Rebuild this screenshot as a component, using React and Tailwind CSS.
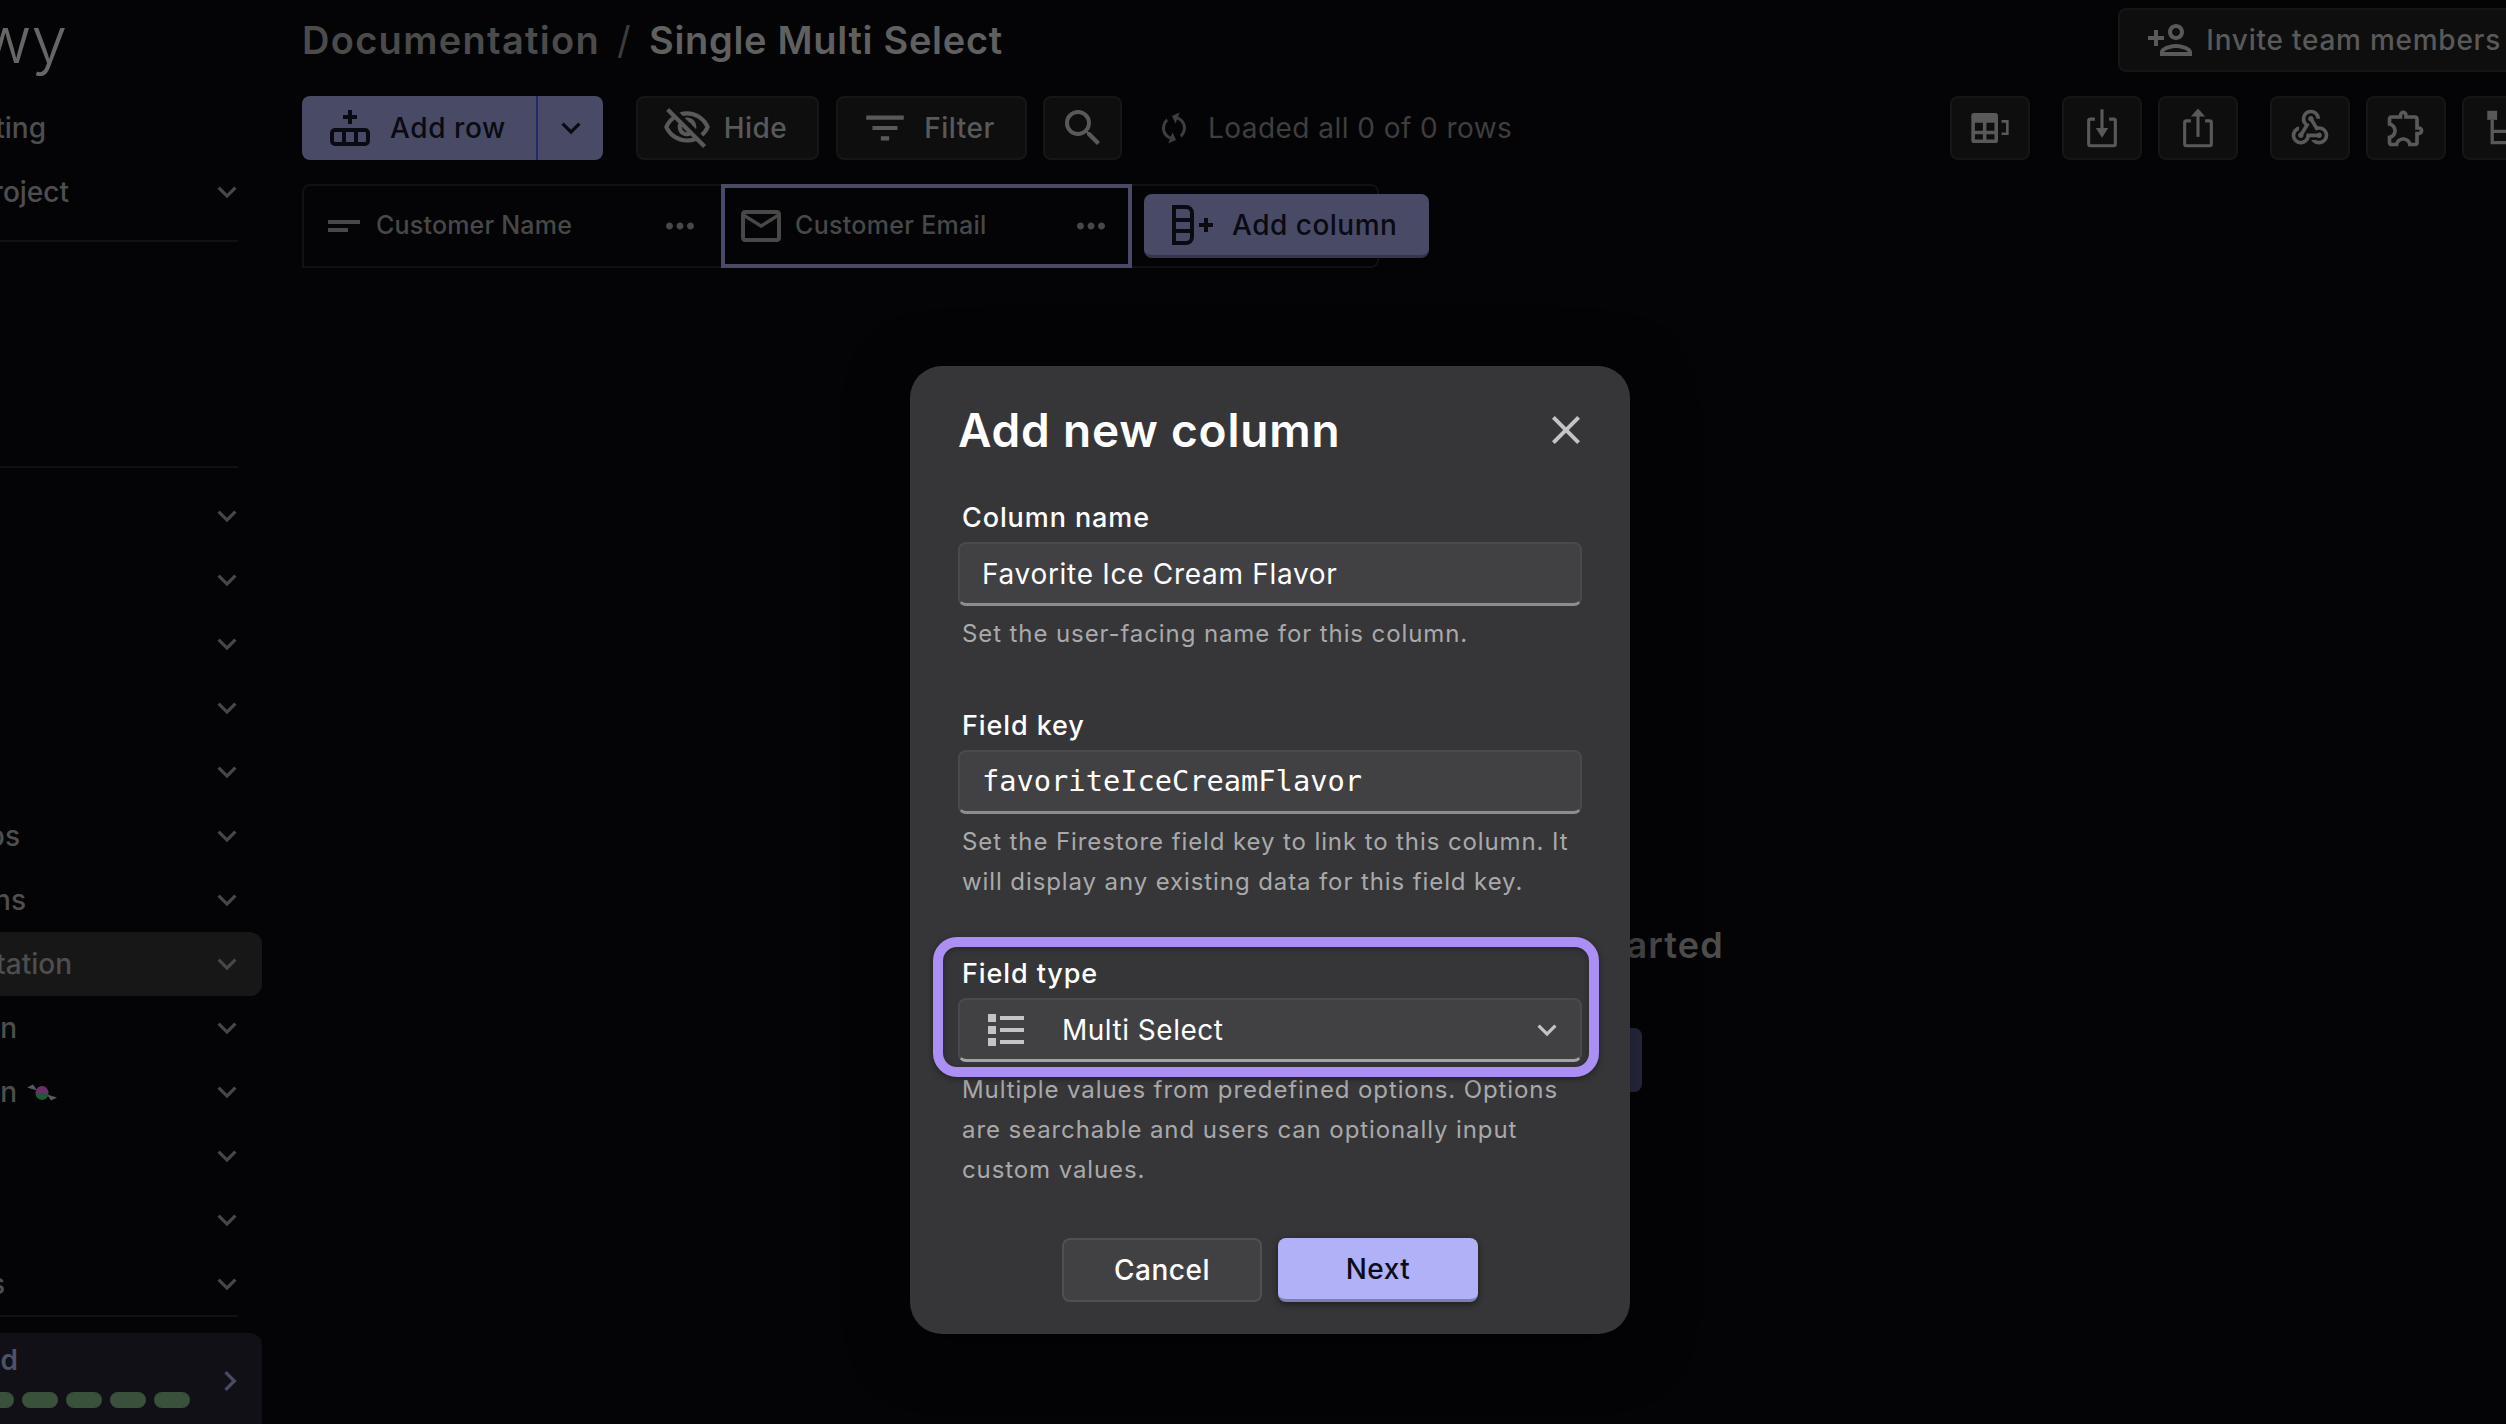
import { MdClose, MdExpandMore, MdChevronRight, MdFilterList, MdMoreHoriz, MdOutlineExtension, MdOutlineMailOutline, MdOutlinePersonAdd, MdOutlineVisibilityOff, MdSearch, MdShortText, MdSync, MdWebhook } from "react-icons/md";

function AddRowIcon({ className }) {
  return (
    <svg viewBox="0 0 40 36" className={className} fill="none" stroke="currentColor">
      <path d="M20 0v14M13 7h14" strokeWidth="4" />
      <rect x="2" y="20" width="36" height="14" rx="3" strokeWidth="4" />
      <path d="M14 20v14M26 20v14" strokeWidth="4" />
    </svg>
  );
}

function AddColumnIcon({ className }) {
  return (
    <svg viewBox="0 0 44 40" className={className} fill="none" stroke="currentColor">
      <path d="M2 2h12a6 6 0 0 1 6 6v24a6 6 0 0 1-6 6H2z" strokeWidth="4" />
      <path d="M2 15h18M2 26h18" strokeWidth="4" />
      <path d="M34 13v14M27 20h14" strokeWidth="4" />
    </svg>
  );
}

function TableIcon({ className }) {
  return (
    <svg viewBox="0 0 44 36" className={className} fill="currentColor">
      <path fillRule="evenodd" d="M4 1h24a3 3 0 0 1 3 3v28a3 3 0 0 1-3 3H4a3 3 0 0 1-3-3V4a3 3 0 0 1 3-3zm1 11v9h9v-9zm13 0v9h9v-9zM5 25v6h9v-6zm13 0v6h9v-6z" />
      <path d="M35 9h8v17h-8v-3h5V12h-5z" />
    </svg>
  );
}

function ImportIcon({ className }) {
  return (
    <svg viewBox="0 0 36 44" className={className} fill="none" stroke="currentColor">
      <path d="M10 12H5a2 2 0 0 0-2 2v26a2 2 0 0 0 2 2h26a2 2 0 0 0 2-2V14a2 2 0 0 0-2-2h-5" strokeWidth="3.5" />
      <path d="M18 1v24" strokeWidth="3.5" />
      <path d="M11 22h14l-7 11z" fill="currentColor" stroke="none" />
    </svg>
  );
}

function ExportIcon({ className }) {
  return (
    <svg viewBox="0 0 36 44" className={className} fill="none" stroke="currentColor">
      <path d="M10 14H5a2 2 0 0 0-2 2v24a2 2 0 0 0 2 2h26a2 2 0 0 0 2-2V16a2 2 0 0 0-2-2h-5" strokeWidth="3.5" />
      <path d="M18 8v24" strokeWidth="3.5" />
      <path d="M10 9h16L18 0z" fill="currentColor" stroke="none" />
    </svg>
  );
}

function TreeIcon({ className }) {
  return (
    <svg viewBox="0 0 36 44" className={className} fill="none" stroke="currentColor">
      <rect x="0" y="1" width="12" height="11" fill="currentColor" stroke="none" />
      <path d="M6 12v28h26M6 26h26" strokeWidth="4" />
    </svg>
  );
}

function MultiSelectIcon({ className }) {
  return (
    <svg viewBox="0 0 36 32" className={className} fill="currentColor">
      <rect x="0" y="0" width="8" height="8" />
      <rect x="0" y="12" width="8" height="8" />
      <rect x="0" y="24" width="8" height="8" />
      <rect x="12" y="2" width="24" height="4" />
      <rect x="12" y="14" width="24" height="4" />
      <rect x="12" y="26" width="24" height="4" />
    </svg>
  );
}

function CandyIcon() {
  return (
    <svg viewBox="0 0 30 16" className="ml-[10px] h-[17px] w-[30px] shrink-0">
      <path d="M0 3l6-3 4 6zM30 13l-6 3-4-6z" fill="#5a5a5a" />
      <circle cx="15" cy="8" r="6.5" fill="#6a2f68" />
      <path d="M8.5 9a6.5 6.5 0 0 0 13 0z" fill="#1f5a36" />
    </svg>
  );
}

function SideRow({ label, width, active, extra }) {
  return (
    <div className={`flex h-[64px] w-[262px] items-center rounded-r-xl text-[#4e4e4e] ${active ? "bg-[#171717]" : ""}`}>
      <div className={`flex shrink-0 justify-end whitespace-nowrap text-[28px] font-medium ${width}`}>{label}</div>
      {extra}
      <MdExpandMore className="ml-auto mr-[16px] size-[38px] shrink-0 text-[#474747]" />
    </div>
  );
}

function ToolButton({ children, className = "" }) {
  return (
    <button className={`flex h-[64px] shrink-0 items-center justify-center rounded-lg border-2 border-[#161617] bg-[#0e0e0f] text-[28px] font-medium tracking-[0.5px] text-[#595959] ${className}`}>
      {children}
    </button>
  );
}

function Field({ label, children, help }) {
  return (
    <div>
      <div className="mb-[6px] h-[36px] pl-1 text-[27px] font-medium leading-[36px] tracking-[0.9px] text-white">{label}</div>
      {children}
      <p className="mt-[8px] pl-1 text-[24px] leading-[40px] tracking-[0.9px] text-[#a9a9ab]">{help}</p>
    </div>
  );
}

function TextBox({ children, mono }) {
  return (
    <div className={`flex h-[64px] items-center rounded-lg border-2 border-b-[3px] border-[#4a4a4c] border-b-[#8d8d8f] bg-[#414143] pl-[22px] text-white ${mono ? "font-['DejaVu_Sans_Mono',monospace] text-[28.7px]" : "text-[28px] tracking-[0.7px]"}`}>
      {children}
    </div>
  );
}

export default function App() {
  return (
    <div className="relative h-[1424px] w-full overflow-hidden bg-[#040407] font-['Inter',sans-serif]">
      <div className="flex w-[2842px]">
        {/* sidebar, cut off by the left edge */}
        <aside className="flex w-[302px] shrink-0 flex-col">
          <div className="flex h-[96px] w-[67px] shrink-0 justify-end whitespace-nowrap pt-[2px] text-[64px] font-light leading-[76px] text-[#666666]">Rowy</div>
          <div className="flex h-[64px] w-[262px] items-center text-[#4e4e4e]">
            <div className="flex w-[46px] shrink-0 justify-end whitespace-nowrap text-[28px] font-medium">Marketing</div>
          </div>
          <SideRow label="My project" width="w-[69px]" />
          <div className="mt-[16px] h-[2px] w-[238px] bg-[#111113]" />
          <div className="h-[224px]" />
          <div className="h-[2px] w-[238px] bg-[#111113]" />
          <div className="mt-[16px] flex flex-col">
            <SideRow label="" width="w-0" />
            <SideRow label="" width="w-0" />
            <SideRow label="" width="w-0" />
            <SideRow label="" width="w-0" />
            <SideRow label="" width="w-0" />
            <SideRow label="Apps" width="w-[20px]" />
            <SideRow label="Columns" width="w-[26px]" />
            <SideRow label="Documentation" width="w-[72px]" active />
            <SideRow label="Design" width="w-[17px]" />
            <SideRow label="Admin" width="w-[17px]" extra={<CandyIcon />} />
            <SideRow label="" width="w-0" />
            <SideRow label="" width="w-0" />
            <SideRow label="Tools" width="w-[5px]" />
          </div>
          <div className="mt-[-1px] h-[2px] w-[238px] bg-[#111113]" />
          <div className="mt-[16px] flex h-[110px] w-[262px] items-start rounded-r-xl bg-[#101016] pt-[8px]">
            <div>
              <div className="flex w-[18px] justify-end whitespace-nowrap text-[28px] font-semibold leading-[38px] text-[#505068]">Get started</div>
              <div className="mt-[13px] flex w-[190px] justify-end gap-[8px]">
                <div className="h-[16px] w-[36px] shrink-0 rounded-full bg-[#39503a]" />
                <div className="h-[16px] w-[36px] shrink-0 rounded-full bg-[#39503a]" />
                <div className="h-[16px] w-[36px] shrink-0 rounded-full bg-[#39503a]" />
                <div className="h-[16px] w-[36px] shrink-0 rounded-full bg-[#39503a]" />
                <div className="h-[16px] w-[36px] shrink-0 rounded-full bg-[#39503a]" />
              </div>
            </div>
            <MdChevronRight className="ml-[20px] mt-[20px] size-[40px] text-[#4a4a66]" />
          </div>
        </aside>

        {/* main area, runs past the right edge */}
        <main className="flex w-[2540px] shrink-0 flex-col">
          <div className="flex h-[96px] items-start justify-between pt-[8px]">
            <h1 className="flex h-[64px] items-center gap-[17px] text-[38px] font-semibold tracking-[1.3px]">
              <span className="text-[#4b4b4b]">Documentation</span>
              <span className="font-normal text-[#3c3c3c]">/</span>
              <span className="tracking-[0.7px] text-[#606060]">Single Multi Select</span>
            </h1>
            <ToolButton className="mr-[309px] gap-[12px] pl-[26px] pr-[30px] tracking-[0.75px]">
              <MdOutlinePersonAdd className="size-[48px]" />
              Invite team members
            </ToolButton>
          </div>

          <div className="flex h-[64px] items-center">
            <div className="flex h-[64px] w-[301px] shrink-0 rounded-lg bg-[#484a66] text-[28px] font-medium tracking-[0.6px] text-[#0a0a12]">
              <div className="flex w-[236px] items-center gap-[20px] border-r-2 border-[#22286a] pl-[28px]">
                <AddRowIcon className="h-[36px] w-[40px] shrink-0" />
                Add row
              </div>
              <div className="flex flex-1 items-center justify-center">
                <MdExpandMore className="size-[38px]" />
              </div>
            </div>
            <ToolButton className="ml-[33px] w-[183px] gap-[12px] pr-[6px]">
              <MdOutlineVisibilityOff className="size-[50px]" />
              Hide
            </ToolButton>
            <ToolButton className="ml-[17px] w-[191px] gap-[14px] pr-[8px]">
              <MdFilterList className="size-[50px]" />
              Filter
            </ToolButton>
            <ToolButton className="ml-[16px] w-[79px]">
              <MdSearch className="size-[48px]" />
            </ToolButton>
            <div className="ml-[34px] flex items-center gap-[16px] text-[28px] tracking-[0.45px] text-[#3e3e3e]">
              <MdSync className="size-[36px] rotate-[20deg]" />
              Loaded all 0 of 0 rows
            </div>
            <div className="ml-auto mr-[300px] flex items-center gap-[16px]">
              <ToolButton className="mr-[16px] w-[80px]"><TableIcon className="h-[32px] w-[44px]" /></ToolButton>
              <ToolButton className="w-[80px]"><ImportIcon className="h-[42px] w-[32px]" /></ToolButton>
              <ToolButton className="mr-[16px] w-[80px]"><ExportIcon className="h-[44px] w-[32px]" /></ToolButton>
              <ToolButton className="w-[80px]"><MdWebhook className="size-[44px]" /></ToolButton>
              <ToolButton className="w-[80px]"><MdOutlineExtension className="size-[44px]" /></ToolButton>
              <ToolButton className="w-[80px]"><TreeIcon className="h-[36px] w-[30px]" /></ToolButton>
            </div>
          </div>

          <div className="mt-[24px] flex h-[84px] text-[25px] font-medium tracking-[0.2px] text-[#484848]">
            <div className="flex w-[419px] shrink-0 items-center rounded-tl-lg border-2 border-r-0 border-[#111113] pl-[16px]">
              <MdShortText className="size-[48px] shrink-0" />
              <span className="ml-[8px]">Customer Name</span>
              <MdMoreHoriz className="ml-auto mr-[20px] size-[42px] shrink-0" />
            </div>
            <div className="flex w-[411px] shrink-0 items-center border-4 border-[#484a66] pl-[12px]">
              <MdOutlineMailOutline className="size-[48px] shrink-0" />
              <span className="ml-[10px] tracking-[0.3px]">Customer Email</span>
              <MdMoreHoriz className="ml-auto mr-[16px] size-[42px] shrink-0" />
            </div>
            <div className="flex w-[247px] shrink-0 items-center rounded-r-lg border-2 border-l-0 border-[#111113] pl-[12px]">
              <button className="flex h-[64px] w-[285px] shrink-0 items-center gap-[16px] rounded-lg border-b-[3px] border-[#34364e] bg-[#484a66] pl-[28px] text-[28px] font-medium tracking-[0.5px] text-[#0a0a12]">
                <AddColumnIcon className="h-[40px] w-[44px]" />
                Add column
              </button>
            </div>
          </div>

          <div className="mt-[653px] flex flex-col items-center">
            <h2 className="text-[36px] font-semibold leading-[48px] tracking-[1.1px] text-[#4d4d4d]">Let's get started</h2>
            <div className="ml-[4px] mt-[59px] h-[64px] w-[136px] rounded-lg bg-[#2b2c44]" />
          </div>
        </main>
      </div>

      {/* modal */}
      <div className="absolute left-[910px] top-[366px] w-[720px] rounded-[32px] bg-[#363638] px-[48px] pb-[32px] pt-[36px] shadow-[0_12px_60px_rgba(0,0,0,0.5)]">
        <div className="flex h-[56px] items-center justify-between">
          <h2 className="text-[46px] font-semibold tracking-[0.8px] text-white">Add new column</h2>
          <MdClose className="mr-[-8px] size-[48px] text-[#c4c4c4]" />
        </div>
        <div className="mt-[42px] flex flex-col gap-[54px]">
          <Field label="Column name" help="Set the user-facing name for this column.">
            <TextBox>Favorite Ice Cream Flavor</TextBox>
          </Field>
          <Field label="Field key" help="Set the Firestore field key to link to this column. It will display any existing data for this field key.">
            <TextBox mono>favoriteIceCreamFlavor</TextBox>
          </Field>
          <Field label="Field type" help="Multiple values from predefined options. Options are searchable and users can optionally input custom values.">
            <div className="flex h-[64px] items-center rounded-lg border-2 border-b-[3px] border-[#4a4a4c] border-b-[#a3a3a5] bg-[#414143] pl-[28px] pr-[14px] text-[28px] tracking-[0.5px] text-white">
              <MultiSelectIcon className="h-[32px] w-[36px] text-[#c4c4c4]" />
              <span className="ml-[38px]">Multi Select</span>
              <MdExpandMore className="ml-auto size-[38px] text-[#c4c4c4]" />
            </div>
          </Field>
        </div>
        <div className="mt-[48px] flex justify-center gap-[16px] tracking-[0.5px]">
          <button className="h-[64px] w-[200px] rounded-lg border-2 border-[#505052] bg-[#414143] text-[28px] font-medium text-white">Cancel</button>
          <button className="h-[64px] w-[200px] rounded-lg border-b-[3px] border-[#7d7eb8] bg-[#b0b1f7] text-[28px] font-medium text-[#0d0d18] shadow-[0_2px_6px_rgba(0,0,0,0.5)]">Next</button>
        </div>
        {/* purple highlight round the field type */}
        <div className="absolute left-[23px] top-[571px] h-[140px] w-[666px] rounded-[24px] border-[10px] border-[#ab8ff5] shadow-[0_2px_6px_rgba(0,0,0,0.4),inset_0_2px_6px_rgba(0,0,0,0.3)]" />
      </div>
    </div>
  );
}
